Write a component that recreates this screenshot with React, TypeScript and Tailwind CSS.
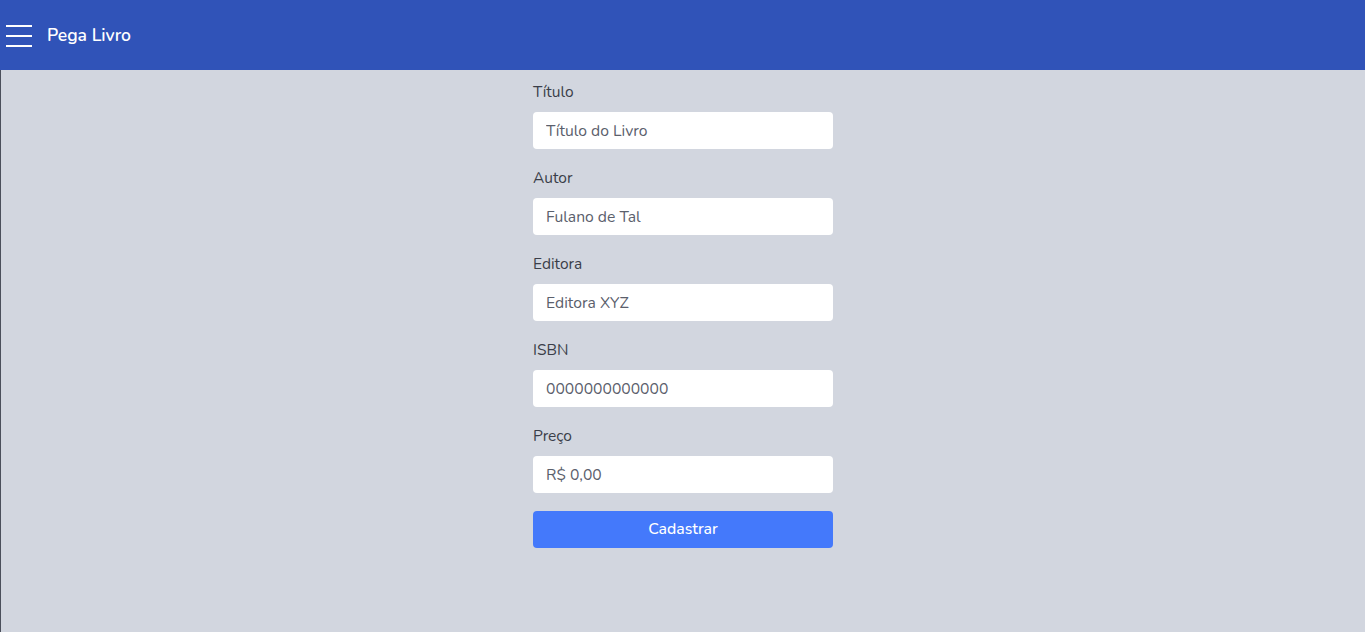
import React from 'react'

const fields = [
    { label: 'Título', placeholder: 'Título do Livro' },
    { label: 'Autor', placeholder: 'Fulano de Tal' },
    { label: 'Editora', placeholder: 'Editora XYZ' },
    { label: 'ISBN', placeholder: '0000000000000' },
    { label: 'Preço', placeholder: 'R$ 0,00' },
]

export default function App() {
    return (
        <div className="min-h-[632px] flex flex-col bg-[#d2d6df] font-['Nunito','Lato','Noto_Sans',sans-serif]">
            {/* Header */}
            <header className="h-[70px] bg-[#3053b8] flex items-center">
                <button className="ml-[6px] mt-[1px] w-[26px] flex flex-col gap-[8px]" aria-label="menu">
                    <span className="block h-[2px] bg-white" />
                    <span className="block h-[2px] bg-white" />
                    <span className="block h-[2px] bg-white" />
                </button>
                <span className="ml-[15px] text-white text-[17.5px] font-semibold">Pega Livro</span>
            </header>

            {/* Form */}
            <main className="flex-1 flex justify-center border-l border-[#4b4f5b] pt-[11px]">
                <form className="w-[300px] flex flex-col" onSubmit={e => e.preventDefault()}>
                    {fields.map(f => (
                        <div key={f.label} className="flex flex-col mb-[18px] last:mb-[17px]">
                            <label className="h-[20px] leading-[22px] text-[15.5px] text-[#3a3e49] mb-[11px]">{f.label}</label>
                            <input
                                placeholder={f.placeholder}
                                className="h-[37px] w-full rounded-[4px] bg-white px-[13px] text-[15.7px] outline-none placeholder:text-[#5b606c] text-[#5b606c]"
                            />
                        </div>
                    ))}
                    <button type="submit" className="h-[37px] w-full rounded-[4px] bg-[#4479fb] text-white text-[15.8px] font-medium">
                        Cadastrar
                    </button>
                </form>
            </main>
        </div>
    )
}
